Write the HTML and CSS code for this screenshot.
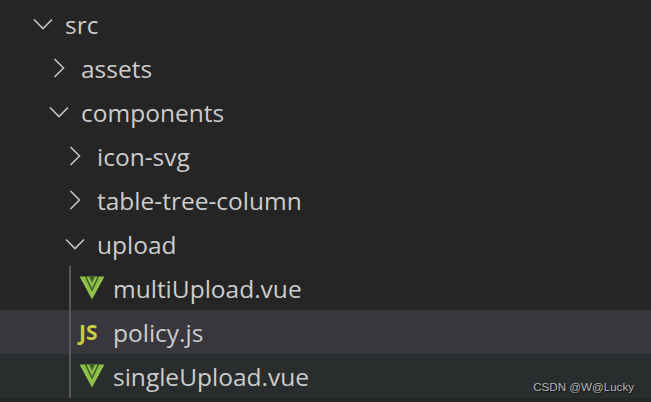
FILE: index.html
```html
<!DOCTYPE html>
<html>
<head>
<meta charset="utf-8">
<title>Explorer</title>
<link rel="stylesheet" href="styles.css">
</head>
<body>
<svg width="0" height="0" class="defs">
  <defs>
    <symbol id="down" viewBox="0 0 20 12"><path d="M1 1.5 L10 10.5 L19 1.5" fill="none" stroke="#c5c5c5" stroke-width="1.6"/></symbol>
    <symbol id="right" viewBox="0 0 12 20"><path d="M1.5 1 L10.5 10 L1.5 19" fill="none" stroke="#c5c5c5" stroke-width="1.6"/></symbol>
    <symbol id="vue" viewBox="0 0 26 24">
      <path d="M0.5 0.5H25.5L13 23.5Z" fill="#8dc149"/>
      <path d="M6.5 0.5L13 14L19.5 0.5" fill="none" stroke="#3f5f26" stroke-width="1.6"/>
      <path d="M10 0.5H16L13 6.5Z" fill="#3f5f26"/>
    </symbol>
  </defs>
</svg>
<div class="tree">
  <i class="guide g1"></i>
  <i class="guide g2"></i>
  <div class="row l0"><svg class="chev-d"><use href="#down"/></svg><span>src</span></div>
  <div class="row l1"><svg class="chev-r"><use href="#right"/></svg><span>assets</span></div>
  <div class="row l1"><svg class="chev-d"><use href="#down"/></svg><span>components</span></div>
  <div class="row l2"><svg class="chev-r"><use href="#right"/></svg><span>icon-svg</span></div>
  <div class="row l2"><svg class="chev-r"><use href="#right"/></svg><span>table-tree-column</span></div>
  <div class="row l2"><svg class="chev-d"><use href="#down"/></svg><span>upload</span></div>
  <div class="group">
    <div class="row file"><svg class="vue"><use href="#vue"/></svg><span>multiUpload.vue</span></div>
    <div class="row file selected"><b class="js">JS</b><span>policy.js</span></div>
    <div class="row file hover"><svg class="vue"><use href="#vue"/></svg><span>singleUpload.vue</span></div>
    <i class="active-guide"></i>
  </div>
</div>
<div class="mark">CSDN @W@Lucky</div>
</body>
</html>
```
FILE: styles.css
```css
html, body { margin: 0; height: 402px; overflow: hidden; background: #252526; }
body { position: relative; font-family: "Open Sans", sans-serif; color: #cccccc; }
.defs { position: absolute; }
.tree { padding-top: 2px; position: relative; }
.row { height: 44px; display: flex; align-items: center; font-size: 24.5px; box-sizing: border-box; }
.row span { white-space: nowrap; }
.l0 { padding-left: 33px; }
.l1 { padding-left: 49px; }
.l2 { padding-left: 65px; }
.chev-d { width: 20px; height: 12px; margin-right: 12px; flex: none; }
.chev-r { width: 12px; height: 20px; margin-left: 4px; margin-right: 16px; flex: none; }
.group { position: relative; }
.file { padding-left: 79px; }
.selected { background: #37373d; }
.hover { background: #2a2d2e; }
.active-guide { position: absolute; left: 69px; top: 0; bottom: 0; width: 2px; background: #585858; }
.guide { position: absolute; width: 1px; background: rgba(255, 255, 255, 0.025); z-index: 1; }
.g1 { left: 38px; top: 46px; height: 356px; }
.g2 { left: 54px; top: 134px; height: 268px; }
.vue { width: 26px; height: 24px; margin-right: 8px; flex: none; }
.js { width: 26px; margin-right: 8px; font: bold 21px/1 "Open Sans", sans-serif; color: #cbcb41; flex: none; }
.mark { position: absolute; right: 17px; bottom: 9px; font: 11.6px "Liberation Sans", sans-serif; color: #b4b4b4; text-shadow: 1px 1px 1px #111; }
```
